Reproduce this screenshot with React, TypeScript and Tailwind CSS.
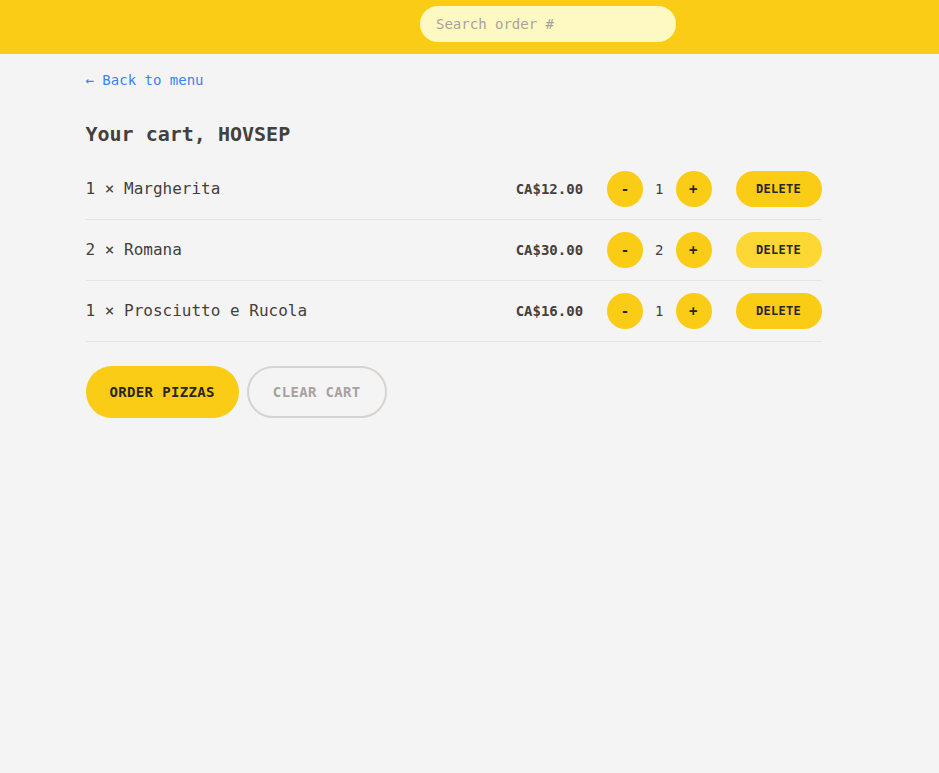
const cart = [
  { id: 1, name: "Margherita", quantity: 1, total: 12 },
  { id: 2, name: "Romana", quantity: 2, total: 30 },
  { id: 3, name: "Prosciutto e Rucola", quantity: 1, total: 16 },
];

function formatCurrency(value: number) {
  return "CA$" + value.toFixed(2);
}

function RoundButton({ children }: { children: React.ReactNode }) {
  return (
    <button className="inline-flex h-9 w-9 items-center justify-center rounded-full bg-[#facc15] text-sm font-bold tracking-wide text-[#292524]">
      {children}
    </button>
  );
}

export default function App() {
  return (
    <div
      className="min-h-screen bg-[#f4f4f4] text-[#44403c]"
      style={{ fontFamily: '"DejaVu Sans Mono", "Liberation Mono", monospace' }}
    >
      <header className="flex h-[54px] items-start bg-[#facc15] pl-[420px] pt-[6px]">
        <input
          placeholder="Search order #"
          className="h-9 w-64 rounded-full bg-[#fef9c3] px-4 text-sm placeholder:text-[#a8a29e] focus:outline-none"
        />
      </header>

      <main className="mx-auto w-[768px] pr-8 pt-[14px]">
        <a href="#" className="text-sm leading-5 text-[#3b82f6]">
          ← Back to menu
        </a>

        <h2 className="mt-[28px] text-xl font-bold leading-7">Your cart, HOVSEP</h2>

        <ul className="mt-[11px] divide-y divide-[#e7e5e4] border-b border-[#e7e5e4]">
          {cart.map((item) => (
            <li key={item.id} className="flex items-center justify-between py-3">
              <p className="text-base">
                {item.quantity} × {item.name}
              </p>
              <div className="flex items-center gap-6">
                <p className="text-sm font-bold">{formatCurrency(item.total)}</p>
                <div className="flex items-center gap-3">
                  <RoundButton>-</RoundButton>
                  <span className="text-sm">{item.quantity}</span>
                  <RoundButton>+</RoundButton>
                </div>
                <button
                  className={
                    "h-9 w-[86px] rounded-full text-xs font-bold tracking-wide text-[#292524] " +
                    (item.id === 2 ? "bg-[#fdd835]" : "bg-[#facc15]")
                  }
                >
                  DELETE
                </button>
              </div>
            </li>
          ))}
        </ul>

        <div className="mt-6 flex gap-2">
          <button className="h-[52px] rounded-full bg-[#facc15] px-6 text-sm font-bold tracking-wide text-[#292524]">
            ORDER PIZZAS
          </button>
          <button className="h-[52px] rounded-full border-2 border-[#d6d3d1] px-6 text-sm font-bold tracking-wide text-[#a8a29e]">
            CLEAR CART
          </button>
        </div>
      </main>
    </div>
  );
}
